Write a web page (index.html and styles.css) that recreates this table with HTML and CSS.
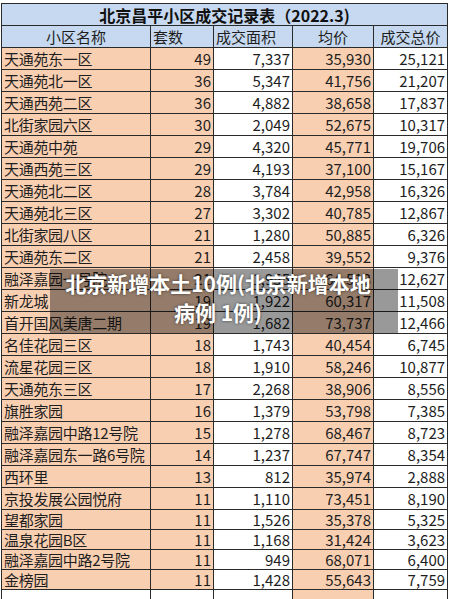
FILE: index.html
```html
<!DOCTYPE html>
<html lang="zh-CN">
<head>
    <meta charset="UTF-8">
    <meta name="viewport" content="width=device-width, initial-scale=1.0">
    <title>北京昌平小区成交记录表</title>
    <link rel="stylesheet" href="styles.css">
</head>
<body>
    <div class="sheet">
        <table class="deals">
            <colgroup>
                <col class="c-name">
                <col class="c-count">
                <col class="c-area">
                <col class="c-price">
                <col class="c-total">
            </colgroup>
            <tr class="title-row">
                <td colspan="5">北京昌平小区成交记录表（2022.3)</td>
            </tr>
            <tr class="head-row">
                <td class="center">小区名称</td>
                <td>套数</td>
                <td>成交面积</td>
                <td class="center">均价</td>
                <td class="center">成交总价</td>
            </tr>
            <tr><td class="name">天通苑东一区</td><td class="num hi">49</td><td class="num">7,337</td><td class="num hi">35,930</td><td class="num">25,121</td></tr>
            <tr><td class="name">天通苑北一区</td><td class="num hi">36</td><td class="num">5,347</td><td class="num hi">41,756</td><td class="num">21,207</td></tr>
            <tr><td class="name">天通西苑二区</td><td class="num hi">36</td><td class="num">4,882</td><td class="num hi">38,658</td><td class="num">17,837</td></tr>
            <tr><td class="name">北街家园六区</td><td class="num hi">30</td><td class="num">2,049</td><td class="num hi">52,675</td><td class="num">10,317</td></tr>
            <tr><td class="name">天通苑中苑</td><td class="num hi">29</td><td class="num">4,320</td><td class="num hi">45,771</td><td class="num">19,706</td></tr>
            <tr><td class="name">天通西苑三区</td><td class="num hi">29</td><td class="num">4,193</td><td class="num hi">37,100</td><td class="num">15,167</td></tr>
            <tr><td class="name">天通苑北二区</td><td class="num hi">28</td><td class="num">3,784</td><td class="num hi">42,958</td><td class="num">16,326</td></tr>
            <tr><td class="name">天通苑北三区</td><td class="num hi">27</td><td class="num">3,302</td><td class="num hi">40,785</td><td class="num">12,867</td></tr>
            <tr><td class="name">北街家园八区</td><td class="num hi">21</td><td class="num">1,280</td><td class="num hi">50,885</td><td class="num">6,326</td></tr>
            <tr><td class="name">天通苑东二区</td><td class="num hi">21</td><td class="num">2,458</td><td class="num hi">39,552</td><td class="num">9,376</td></tr>
            <tr><td class="name">融泽嘉园一号院</td><td class="num hi">21</td><td class="num">1,955</td><td class="num hi">64,513</td><td class="num">12,627</td></tr>
            <tr><td class="name">新龙城</td><td class="num hi">19</td><td class="num">1,922</td><td class="num hi">60,317</td><td class="num">11,508</td></tr>
            <tr><td class="name">首开国风美唐二期</td><td class="num hi">19</td><td class="num">1,682</td><td class="num hi">73,737</td><td class="num">12,466</td></tr>
            <tr><td class="name">名佳花园三区</td><td class="num hi">18</td><td class="num">1,743</td><td class="num hi">40,454</td><td class="num">6,745</td></tr>
            <tr><td class="name">流星花园三区</td><td class="num hi">18</td><td class="num">1,910</td><td class="num hi">58,246</td><td class="num">10,877</td></tr>
            <tr><td class="name">天通苑东三区</td><td class="num hi">17</td><td class="num">2,268</td><td class="num hi">38,906</td><td class="num">8,556</td></tr>
            <tr><td class="name">旗胜家园</td><td class="num hi">16</td><td class="num">1,379</td><td class="num hi">53,798</td><td class="num">7,385</td></tr>
            <tr><td class="name">融泽嘉园中路12号院</td><td class="num hi">15</td><td class="num">1,278</td><td class="num hi">68,467</td><td class="num">8,723</td></tr>
            <tr><td class="name">融泽嘉园东一路6号院</td><td class="num hi">14</td><td class="num">1,237</td><td class="num hi">67,747</td><td class="num">8,354</td></tr>
            <tr><td class="name">西环里</td><td class="num hi">13</td><td class="num">812</td><td class="num hi">35,974</td><td class="num">2,888</td></tr>
            <tr><td class="name">京投发展公园悦府</td><td class="num hi">11</td><td class="num">1,110</td><td class="num hi">73,451</td><td class="num">8,190</td></tr>
            <tr class="short"><td class="name">望都家园</td><td class="num hi">11</td><td class="num">1,526</td><td class="num hi">35,378</td><td class="num">5,325</td></tr>
            <tr class="short"><td class="name">温泉花园B区</td><td class="num hi">11</td><td class="num">1,168</td><td class="num hi">31,424</td><td class="num">3,623</td></tr>
            <tr class="short"><td class="name">融泽嘉园中路2号院</td><td class="num hi">11</td><td class="num">949</td><td class="num hi">68,071</td><td class="num">6,400</td></tr>
            <tr class="short"><td class="name">金榜园</td><td class="num hi">11</td><td class="num">1,428</td><td class="num hi">55,643</td><td class="num">7,759</td></tr>
            <tr class="short"><td></td><td></td><td></td><td class="hi"></td><td></td></tr>
        </table>

        <!-- 图片上的标题浮层 -->
        <div class="caption">北京新增本土10例(北京新增本地病例 1例)</div>
    </div>
</body>
</html>
```

FILE: styles.css
```css
body {
    margin: 0;
    padding: 0;
    background-color: #fff;
    font-family: "Noto Sans CJK SC", "Microsoft YaHei", sans-serif;
    overflow: hidden;
}

.sheet {
    position: relative;
    width: 450px;
    height: 599px;
    padding: 3px 0 0 1px;
    box-sizing: border-box;
}

.deals {
    border-collapse: collapse;
    table-layout: fixed;
    width: 446px;
    color: #1e1e1e;
    font-size: 15px;
}

.c-name { width: 149px; }
.c-count { width: 63px; }
.c-area { width: 79px; }
.c-price { width: 81px; }
.c-total { width: 74px; }

.deals td {
    border: 1px solid #2a2a2a;
    padding: 0 2px;
    height: 21px;
    line-height: 20px;
    white-space: nowrap;
    overflow: hidden;
}

.deals tr.short td {
    height: 19px;
    line-height: 18px;
}

.title-row td {
    background-color: #c6d9f0;
    text-align: center;
    font-weight: bold;
    font-size: 16px;
    color: #111;
}

.head-row td {
    background-color: #c6d9f0;
}

.center {
    text-align: center;
}

.name {
    background-color: #f9cfb1;
    letter-spacing: -0.3px;
}

.num {
    text-align: right;
}

.deals td.hi {
    background-color: #f9cfb1;
}

/* 浮层文字 */
.caption {
    position: absolute;
    left: 50px;
    top: 269px;
    width: 348px;
    height: 64px;
    box-sizing: border-box;
    padding: 0 20px 0 8px;
    background: rgba(0, 0, 0, 0.4);
    color: #fff;
    font-weight: bold;
    font-size: 21px;
    line-height: 29px;
    text-align: center;
    text-shadow: 0 0 3px rgba(0, 0, 0, 0.6);
}
```
